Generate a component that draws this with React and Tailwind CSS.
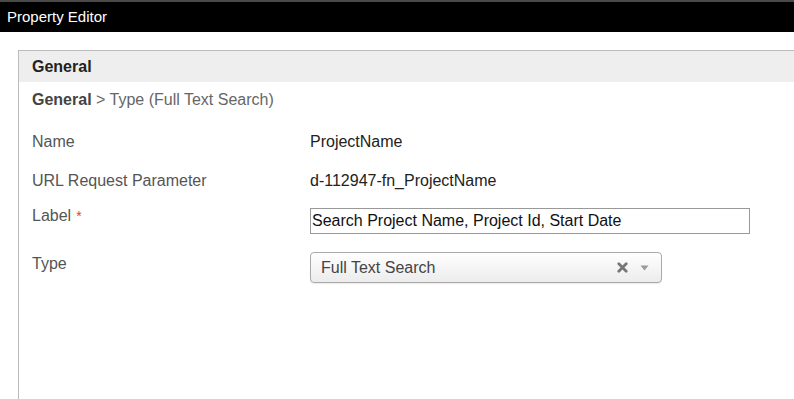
import React from 'react';

function Row({ label, required, children, className = '', labelClass = '' }) {
  return (
    <div className={`flex items-start ${className}`}>
      <div className={`w-[278px] shrink-0 text-[16px] leading-[18px] text-[#555] ${labelClass}`}>
        {label}
        {required && <span className="ml-[5px] text-[14px] align-top text-[#e33]">*</span>}
      </div>
      <div className="flex-1">{children}</div>
    </div>
  );
}

export default function App() {
  return (
    <div className="w-[794px] h-[399px] overflow-hidden bg-white font-['Liberation_Sans',Arial,sans-serif]">
      {/* Title bar */}
      <div className="h-[2px] bg-[#4a4a4a]" />
      <div className="h-[30px] bg-black flex items-center px-[7px] text-white text-[15px]">
        Property Editor
      </div>

      {/* Panel */}
      <div className="ml-[18px] mt-[18px] h-[400px] border-l border-t border-[#bbbbbb]">
        <div className="h-[31px] bg-[#eeeeee] flex items-center px-[13px] text-[16px] font-bold text-[#222]">
          General
        </div>

        <div className="px-[13px]">
          <div className="mt-[9px] text-[16px] leading-[18px] text-[#666]">
            <span className="font-bold text-[#444]">General</span> &gt; Type (Full Text Search)
          </div>

          <Row label="Name" className="mt-[24px]">
            <div className="text-[16px] leading-[18px] text-[#222]">ProjectName</div>
          </Row>

          <Row label="URL Request Parameter" className="mt-[21px]">
            <div className="text-[16px] leading-[18px] text-[#222]">d-112947-fn_ProjectName</div>
          </Row>

          <Row label="Label" required className="mt-[17px]">
            <input
              type="text"
              defaultValue="Search Project Name, Project Id, Start Date"
              className="mt-[1px] w-[440px] h-[26px] border border-[#999] px-[1px] text-[16px] text-[#111] outline-none"
            />
          </Row>

          <Row label="Type" className="mt-[19px]" labelClass="pt-[2px]">
            <div className="-mt-[1px] w-[352px] h-[31px] rounded-[4px] border border-[#aaa] bg-gradient-to-b from-white to-[#ececec] shadow-[0_1px_1px_rgba(0,0,0,0.08)] flex items-center pl-[10px] pr-[10px]">
              <span className="flex-1 text-[16px] text-[#444]">Full Text Search</span>
              <svg width="11" height="11" viewBox="0 0 11 11" className="mr-[12px]">
                <path d="M1.8 1.8 L9.2 9.2 M9.2 1.8 L1.8 9.2" stroke="#777" strokeWidth="2.8" strokeLinecap="round" />
              </svg>
              <svg width="9" height="6" viewBox="0 0 9 6" className="mr-[2px]">
                <path d="M0.5 0.5 L8.5 0.5 L4.5 5.5 Z" fill="#999" />
              </svg>
            </div>
          </Row>
        </div>
      </div>
    </div>
  );
}
